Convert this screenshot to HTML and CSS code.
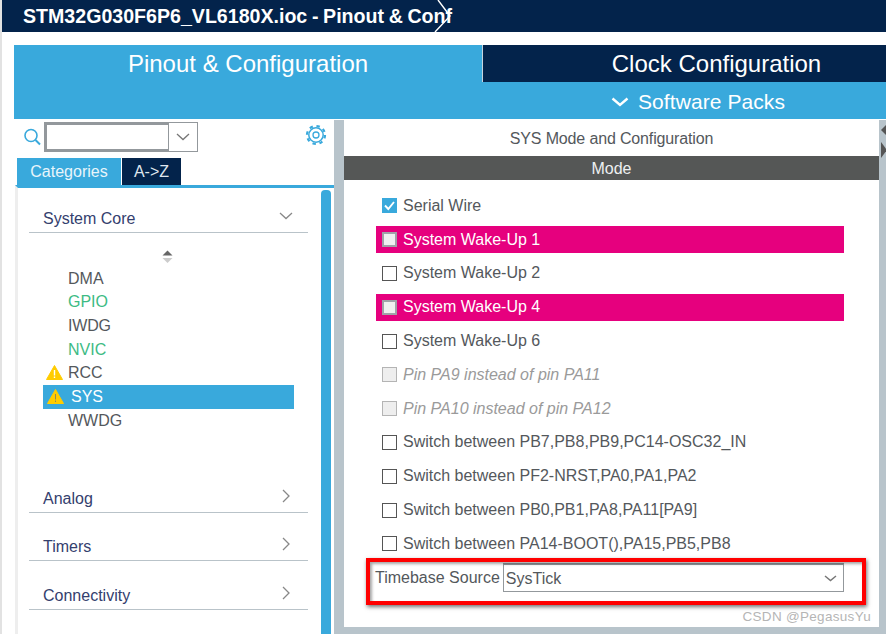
FILE: index.html
```html
<!DOCTYPE html>
<html lang="en">
<head>
<meta charset="utf-8">
<title>STM32G030F6P6_VL6180X.ioc - Pinout &amp; Configuration</title>
<link rel="stylesheet" href="styles.css">
</head>
<body>
<div class="app">
  <header class="titlebar">
    <span class="title">STM32G030F6P6_VL6180X.ioc - Pinout &amp; Conf</span>
    <svg class="crumb" width="20" height="32" viewBox="0 0 20 32"><path d="M6 0 L18 16 L3 32" fill="none" stroke="#fff" stroke-width="1.4"/></svg>
  </header>
  <div class="main">
    <nav class="tabs">
      <div class="tab tab-active">Pinout &amp; Configuration</div>
      <div class="tab tab-clock">Clock Configuration</div>
    </nav>
    <div class="packs">
      <div class="packs-spacer"></div>
      <div class="packs-label">
        <svg width="18" height="10" viewBox="0 0 18 10"><path d="M1.5 1.5 L9 8 L16.5 1.5" fill="none" stroke="#fff" stroke-width="2.4"/></svg>
        <span>Software Packs</span>
      </div>
    </div>
    <div class="content">
      <aside class="side">
        <div class="search-row">
          <svg class="search-icon" width="20" height="20" viewBox="0 0 20 20"><circle cx="9" cy="8.5" r="6" fill="none" stroke="#39a9dc" stroke-width="1.6"/><path d="M13.5 13 L18 17.5" stroke="#39a9dc" stroke-width="2"/></svg>
          <div class="search-input"></div>
          <div class="search-drop">
            <svg width="14" height="8" viewBox="0 0 14 8"><path d="M1 1 L7 6.5 L13 1" fill="none" stroke="#777" stroke-width="1.3"/></svg>
          </div>
          <svg class="gear" width="22" height="22" viewBox="0 0 22 22">
            <circle cx="11" cy="11" r="7.2" fill="none" stroke="#39a9dc" stroke-width="1.5"/>
            <circle cx="11" cy="11" r="9" fill="none" stroke="#39a9dc" stroke-width="2.2" stroke-dasharray="3.4 3.7"/>
            <circle cx="11" cy="11" r="3" fill="none" stroke="#39a9dc" stroke-width="1.3"/>
          </svg>
        </div>
        <div class="side-tabs">
          <div class="side-tab side-tab-on">Categories</div>
          <div class="side-tab side-tab-off">A-&gt;Z</div>
        </div>
        <div class="side-body">
          <div class="tree">
            <div class="cat cat-first">
              <span>System Core</span>
              <svg width="14" height="8" viewBox="0 0 14 8"><path d="M1 1 L7 6.5 L13 1" fill="none" stroke="#888" stroke-width="1.3"/></svg>
            </div>
            <div class="sorter">
              <svg width="11" height="14" viewBox="0 0 11 14"><path d="M5.5 0.5 L10.5 5.5 H0.5 Z" fill="#666"/><path d="M0.5 8 H10.5 L5.5 13 Z" fill="#ccc"/></svg>
            </div>
            <ul class="items">
              <li class="item">DMA</li>
              <li class="item item-green">GPIO</li>
              <li class="item item-tight">IWDG</li>
              <li class="item item-green">NVIC</li>
              <li class="item">
                <svg class="warn" width="17" height="15" viewBox="0 0 17 15"><path d="M8.5 0.5 L16.5 14.5 H0.5 Z" fill="#ffcc00" stroke="#ffcc00" stroke-linejoin="round"/><path d="M8.5 5 V10.5 M8.5 11.5 V13" stroke="#fff" stroke-width="1.4"/></svg>
                <span>RCC</span>
              </li>
              <li class="item item-sel">
                <svg class="warn warn-sel" width="17" height="15" viewBox="0 0 17 15"><path d="M8.5 0.5 L16.5 14.5 H0.5 Z" fill="#ffcc00" stroke="#ffcc00" stroke-linejoin="round"/><path d="M8.5 5 V10.5 M8.5 11.5 V13" stroke="#8a8a60" stroke-width="1"/></svg>
                <span>SYS</span>
              </li>
              <li class="item">WWDG</li>
            </ul>
            <div class="cat cat-analog">
              <span>Analog</span>
              <svg width="8" height="14" viewBox="0 0 8 14"><path d="M1 1 L7 7 L1 13" fill="none" stroke="#888" stroke-width="1.3"/></svg>
            </div>
            <div class="cat">
              <span>Timers</span>
              <svg width="8" height="14" viewBox="0 0 8 14"><path d="M1 1 L7 7 L1 13" fill="none" stroke="#888" stroke-width="1.3"/></svg>
            </div>
            <div class="cat">
              <span>Connectivity</span>
              <svg width="8" height="14" viewBox="0 0 8 14"><path d="M1 1 L7 7 L1 13" fill="none" stroke="#888" stroke-width="1.3"/></svg>
            </div>
          </div>
          <div class="thumb"></div>
        </div>
      </aside>
      <section class="panel">
        <div class="panel-inner">
          <h2 class="panel-title">SYS Mode and Configuration</h2>
          <div class="mode-bar">Mode</div>
          <div class="rows">
            <label class="row"><span class="box box-on"><svg class="tick" width="15" height="15" viewBox="0 0 15 15"><path d="M3 7.5 L6.3 11 L12 4" fill="none" stroke="#fff" stroke-width="1.9"/></svg></span>Serial Wire</label>
            <label class="row row-pink"><span class="box box-pink"></span>System Wake-Up 1</label>
            <label class="row"><span class="box"></span>System Wake-Up 2</label>
            <label class="row row-pink"><span class="box box-pink"></span>System Wake-Up 4</label>
            <label class="row"><span class="box"></span>System Wake-Up 6</label>
            <label class="row row-off"><span class="box box-off"></span>Pin PA9 instead of pin PA11</label>
            <label class="row row-off"><span class="box box-off"></span>Pin PA10 instead of pin PA12</label>
            <label class="row"><span class="box"></span>Switch between PB7,PB8,PB9,PC14-OSC32_IN</label>
            <label class="row"><span class="box"></span>Switch between PF2-NRST,PA0,PA1,PA2</label>
            <label class="row"><span class="box"></span>Switch between PB0,PB1,PA8,PA11[PA9]</label>
            <label class="row"><span class="box"></span>Switch between PA14-BOOT(),PA15,PB5,PB8</label>
          </div>
          <div class="timebase">
            <span class="timebase-label">Timebase Source</span>
            <div class="select">
              <span>SysTick</span>
              <svg width="13" height="7" viewBox="0 0 13 7"><path d="M1 1 L6.5 5.5 L12 1" fill="none" stroke="#777" stroke-width="1.5"/></svg>
            </div>
          </div>
          <div class="red-box"></div>
          <div class="watermark">CSDN @PegasusYu</div>
        </div>
        <div class="panel-rail">
          <svg class="rail-arrows" width="7" height="38" viewBox="0 0 7 38"><path d="M7 5 L2 10 L7 15 Z" fill="#555"/><path d="M2 22 L8 30 L2 38 Z" fill="#555"/></svg>
        </div>
      </section>
    </div>
  </div>
</div>
</body>
</html>
```
FILE: styles.css
```css
* { box-sizing: border-box; }
html, body { margin: 0; padding: 0; height: 100%; overflow: hidden; background: #fff; }
body { font-family: "Liberation Sans", Arial, sans-serif; color: #54585c; }
.app { width: 886px; height: 634px; display: flex; flex-direction: column; border-left: 2px solid #e2e2e2; overflow: hidden; }
.titlebar { height: 32px; flex: none; background: #03234b; color: #fff; display: flex; align-items: center; padding-left: 21px; position: relative; }
.title { font-size: 19.6px; font-weight: 700; white-space: nowrap; word-spacing: -0.8px; }
.crumb { position: absolute; left: 430px; top: 0; }
.main { flex: 1; min-height: 0; display: flex; flex-direction: column; padding: 13px 0 0 12px; }
.tabs { display: flex; height: 37px; flex: none; }
.tab { color: #fff; font-size: 24px; display: flex; justify-content: center; padding-top: 5px; }
.tab-active { width: 468px; background: #39a9dc; }
.tab-clock { flex: 1; background: #03234b; border-left: 1px solid #c6d4de; padding-left: 64px; }
.packs { height: 37px; flex: none; background: #39a9dc; color: #fff; font-size: 21px; letter-spacing: 0.08px; display: flex; align-items: center; padding-top: 2px; }
.packs-spacer { width: 597px; flex: none; }
.packs-label { display: flex; align-items: center; gap: 9px; }
.content { flex: 1; min-height: 0; display: flex; padding-top: 1px; }
.side { width: 320px; flex: none; display: flex; flex-direction: column; }
.search-row { height: 34px; flex: none; display: flex; align-items: center; padding: 0 0 0 8px; }
.search-icon { flex: none; margin-right: 2px; }
.search-input { width: 125px; height: 30px; border: 3px solid #93989c; border-right-width: 1px; background: #fff; }
.search-drop { width: 29px; height: 30px; border: 1px solid #93989c; border-left: 0; display: flex; align-items: center; justify-content: center; }
.gear { margin-left: auto; margin-right: 7px; margin-top: -5px; flex: none; }
.side-tabs { display: flex; height: 31px; flex: none; padding: 4px 0 0 3px; gap: 1px; font-size: 16px; }
.side-tab { height: 27px; display: flex; align-items: center; justify-content: center; }
.side-tab-on { width: 104px; background: #39a9dc; color: #e8f5fb; }
.side-tab-off { width: 59px; background: #03234b; color: #dfe6ee; }
.side-body { flex: 1; min-height: 0; display: flex; border-top: 3px solid #39a9dc; border-left: 3px solid #eeeeee; position: relative; margin-left: 1px; }
.tree { flex: 1; padding: 0 13px 0 11px; }
.thumb { width: 10px; margin: 2px 3px 0 0; background: #39a9dc; border-radius: 4px 4px 0 0; flex: none; }
.cat { height: 32px; border-bottom: 1px solid #b9c3c9; display: flex; justify-content: space-between; align-items: center; padding: 0 18px 0 14px; font-size: 16px; color: #34406e; margin-top: 17px; }
.cat-first { margin-top: 12px; height: 33px; padding-right: 15px; }
.cat-analog { margin-top: 48.3px; }
.cat-analog + .cat { margin-top: 16px; }
.cat span { padding-top: 6px; }
.sorter { height: 33.7px; display: flex; justify-content: center; align-items: flex-end; padding: 0 2px 2.7px 0; }
.items { list-style: none; margin: 0 14px; padding: 0; }
.item { height: 23.7px; line-height: 23.7px; font-size: 16px; padding-left: 25px; display: flex; align-items: center; position: relative; color: #54585c; }
.item-tight { letter-spacing: -0.2px; }
.item-green { color: #3dbb84; }
.item-sel { background: #39a9dc; color: #fff; padding-left: 28px; }
.warn { position: absolute; left: 3px; top: 4px; }
.warn-sel { left: 4px; }
.panel { flex: 1; min-width: 0; display: flex; border-left: 10px solid #b8c4cb; background: #b8c4cb; }
.panel-inner { width: 535px; height: 507px; background: #fff; flex: none; position: relative; }
.panel-rail { flex: 1; }
.rail-arrows { display: block; }
.panel-title { margin: 0; height: 36px; padding-top: 10px; font-size: 16px; font-weight: 400; text-align: center; color: #54585c; letter-spacing: -0.15px; }
.mode-bar { height: 24px; padding-top: 1px; background: #555756; color: #eef0f2; font-size: 16px; text-align: center; line-height: 24px; }
.rows { padding: 12.4px 35px 0 32px; display: flex; flex-direction: column; }
.row { height: 27px; margin-bottom: 6.8px; display: flex; align-items: center; font-size: 16px; padding-left: 6px; color: #54585c; white-space: nowrap; }
.row-pink { background: #e6007e; color: #fff; }
.row-off { color: #9a9a9a; font-style: italic; }
.box { width: 15px; height: 15px; border: 1.5px solid #555; background: #fff; margin-right: 6px; flex: none; display: block; }
.box-on { background: #39a9dc; border: 0; }
.tick { display: block; }
.box-pink { background: #f0f0f0; border: 2px solid #a0a3a8; }
.box-off { background: #eeeeee; border: 1.5px solid #b4b4b4; }
.timebase { position: relative; margin: -1px 35px 0 31px; height: 29px; display: flex; align-items: center; font-size: 16px; color: #54585c; gap: 3px; }
.timebase-label { white-space: nowrap; padding-top: 1px; }
.select { flex: 1; height: 29px; border: 1px solid #93989c; border-top-width: 2px; display: flex; align-items: center; justify-content: space-between; padding: 1px 6px 0 2px; }
.red-box { position: absolute; left: 22px; top: 438px; width: 500px; height: 47px; border: 4px solid #f00; box-shadow: 1px 2px 4px rgba(0,0,0,.55), inset 2px 2px 3px rgba(0,0,0,.35); }
.watermark { position: absolute; right: 8px; top: 489px; font-size: 13.5px; color: #b5b5b5; letter-spacing: .3px; white-space: nowrap; }
```
